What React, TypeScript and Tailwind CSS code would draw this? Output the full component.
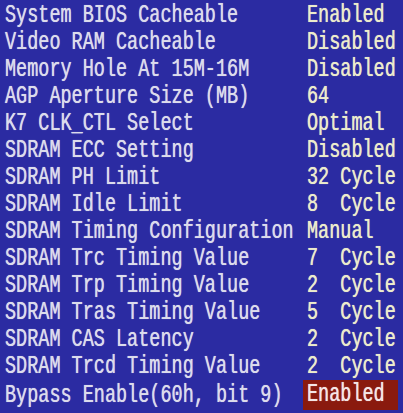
import React from 'react';

type Row = { name: string; value: string; active?: boolean };

const rows: Row[] = [
  { name: 'System BIOS Cacheable', value: 'Enabled' },
  { name: 'Video RAM Cacheable', value: 'Disabled' },
  { name: 'Memory Hole At 15M-16M', value: 'Disabled' },
  { name: 'AGP Aperture Size (MB)', value: '64' },
  { name: 'K7 CLK_CTL Select', value: 'Optimal' },
  { name: 'SDRAM ECC Setting', value: 'Disabled' },
  { name: 'SDRAM PH Limit', value: '32 Cycle' },
  { name: 'SDRAM Idle Limit', value: '8  Cycle' },
  { name: 'SDRAM Timing Configuration', value: 'Manual' },
  { name: 'SDRAM Trc Timing Value', value: '7  Cycle' },
  { name: 'SDRAM Trp Timing Value', value: '2  Cycle' },
  { name: 'SDRAM Tras Timing Value', value: '5  Cycle' },
  { name: 'SDRAM CAS Latency', value: '2  Cycle' },
  { name: 'SDRAM Trcd Timing Value', value: '2  Cycle' },
  { name: 'Bypass Enable(60h, bit 9)', value: 'Enabled', active: true },
];

const App: React.FC = () => {
  return (
    <div
      className="w-[403px] h-[413px] overflow-hidden bg-[#2b2ba2] pt-[2px] pl-[5px]"
      style={{ fontFamily: '"Liberation Mono", "DejaVu Sans Mono", monospace' }}
    >
      {rows.map((row) => (
        <div key={row.name} className="grid grid-cols-[302px_1fr] h-[27px] items-center text-[18.5px] leading-[27px] whitespace-pre">
          <span className="inline-block scale-y-[1.4] text-[#dcdcec] [text-shadow:0_0_0.6px_#dcdcec]">{row.name}</span>
          {row.active ? (
            <span className="-ml-[4px] w-[95px] pl-[4px] h-[30px] leading-[30px] bg-[#8a1a0e] text-[#f4e6e6]">
              <span className="inline-block scale-y-[1.4] [text-shadow:0_0_0.6px_#f4e6e6]">{row.value}</span>
            </span>
          ) : (
            <span className="inline-block scale-y-[1.4] text-[#ececcc] [text-shadow:0_0_0.6px_#ececcc]">{row.value}</span>
          )}
        </div>
      ))}
    </div>
  );
};

export default App;
